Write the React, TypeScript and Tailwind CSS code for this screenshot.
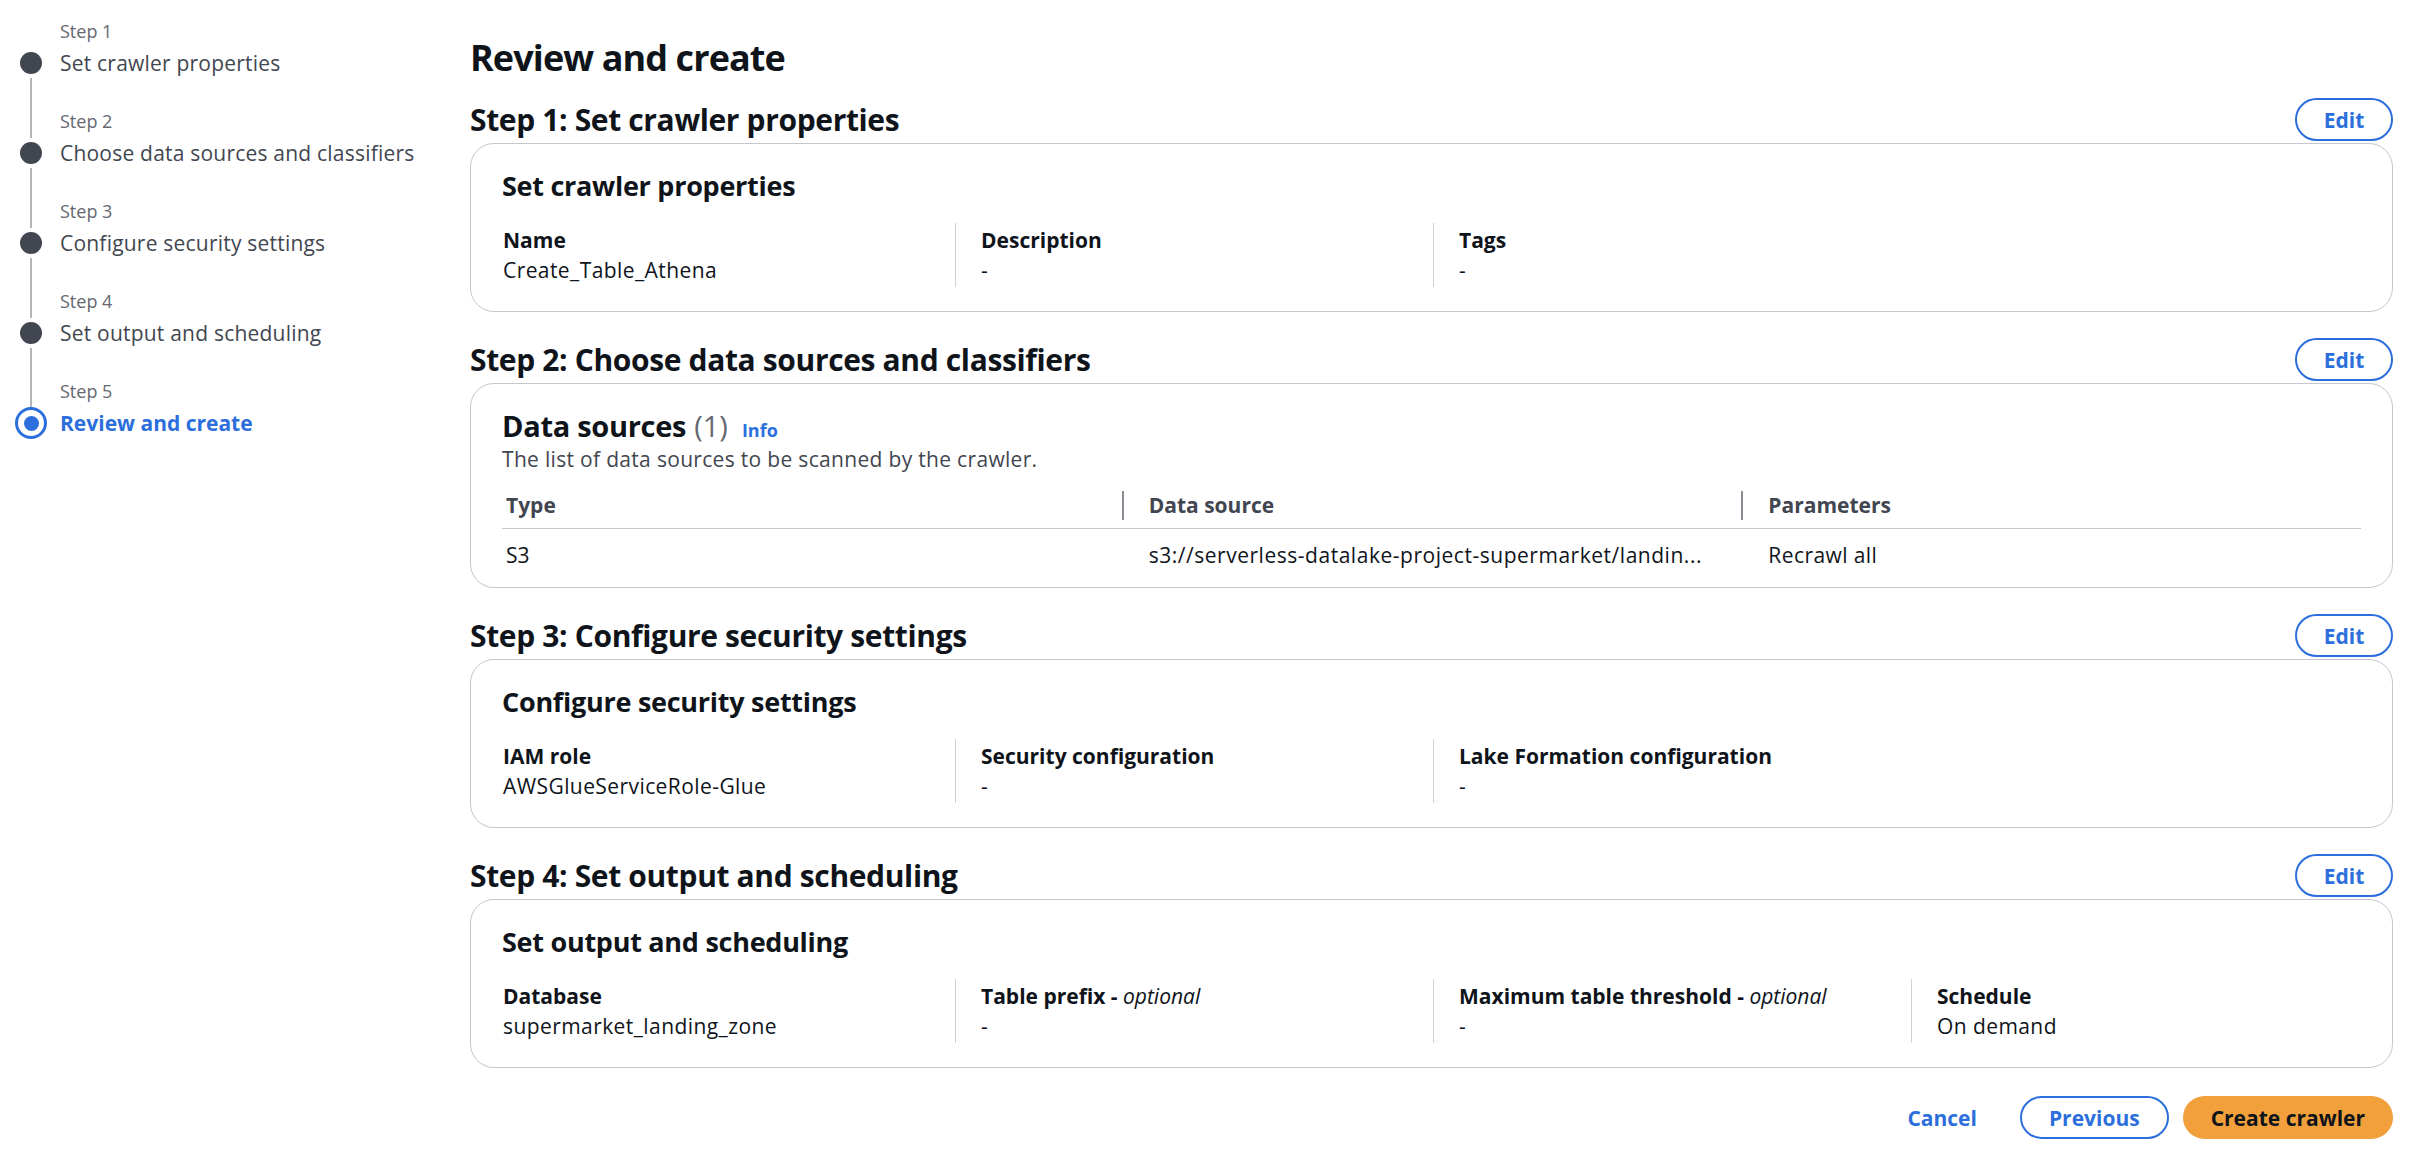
import React from "react";

const FONT = "font-['Open_Sans',sans-serif]";

function NavStep({ n, title, first, last, active }: { n: number; title: string; first?: boolean; last?: boolean; active?: boolean }) {
  return (
    <div className="flex flex-col">
      <div className="flex h-[29px]">
        <div className="flex w-[22px] justify-center">
          {!first && <div className="h-full w-[2px] bg-[#b4b4bb]" />}
        </div>
        <div className="ml-[18px] text-[18px] leading-[24px] text-[#656871]">Step {n}</div>
      </div>
      <div className="flex h-[30px] items-center">
        <div className="flex w-[22px] items-center justify-center">
          {active ? (
            <div className="flex h-[32px] w-[32px] shrink-0 items-center justify-center rounded-full border-[3px] border-[#2c6fdc]">
              <div className="h-[15px] w-[15px] rounded-full bg-[#2c6fdc]" />
            </div>
          ) : (
            <div className="h-[22px] w-[22px] shrink-0 rounded-full bg-[#424650]" />
          )}
        </div>
        <div
          className={
            active
              ? "ml-[18px] whitespace-nowrap text-[21px] font-bold leading-[30px] text-[#2c6fdc]"
              : "ml-[18px] whitespace-nowrap text-[21px] leading-[30px] tracking-[0.01em] text-[#424650]"
          }
        >
          {title}
        </div>
      </div>
      {!last && (
        <div className="flex h-[31px] w-[22px] justify-center">
          <div className="h-full w-[2px] bg-[#b4b4bb]" />
        </div>
      )}
    </div>
  );
}

function EditButton() {
  return (
    <button className="flex h-[43px] w-[98px] items-center justify-center rounded-full border-2 border-[#2c6fdc] text-[21px] font-bold leading-[30px] text-[#2c6fdc]">
      Edit
    </button>
  );
}

function Section({ title, children }: { title: string; children: React.ReactNode }) {
  return (
    <section className="flex flex-col">
      <div className="flex h-[43px] items-center justify-between">
        <h2 className="text-[30px] font-bold leading-[36px] tracking-[-0.012em] text-[#0f141a]">{title}</h2>
        <EditButton />
      </div>
      <div className="mt-[2px] rounded-[24px] border border-[#c6c6cd] bg-white">{children}</div>
    </section>
  );
}

type KV = { label: React.ReactNode; value: string };

function KeyValueCard({ heading, items }: { heading: string; items: KV[] }) {
  return (
    <div className="pb-[24px] pt-[26px]">
      <h3 className="pl-[31px] text-[27px] font-bold leading-[32px] tracking-[-0.01em] text-[#0f141a]">{heading}</h3>
      <div className="mt-[21px] pl-[6px]">
        <div className="grid grid-cols-[repeat(4,478px)]">
          {items.map((it, i) => (
            <div
              key={i}
              className={
                i === 0
                  ? "border-l border-transparent py-[2px] pl-[25px]"
                  : "border-l border-[#d1d1d6] py-[2px] pl-[25px]"
              }
            >
              <div className="text-[21px] font-bold leading-[30px] text-[#0f141a]">{it.label}</div>
              <div className="text-[21px] leading-[30px] tracking-[0.02em] text-[#0f141a]">{it.value}</div>
            </div>
          ))}
        </div>
      </div>
    </div>
  );
}

function Optional({ label }: { label: string }) {
  return (
    <>
      {label} - <span className="font-normal italic">optional</span>
    </>
  );
}

function DataSourcesCard() {
  return (
    <div className="px-[31px] pb-[6px] pt-[26px]">
      <div className="flex h-[32px] items-baseline">
        <h3 className="text-[29px] font-bold leading-[32px] tracking-[-0.01em] text-[#0f141a]">Data sources</h3>
        <span className="ml-[8px] text-[29px] leading-[32px] text-[#656871]">(1)</span>
        <span className="ml-[14px] text-[18px] font-bold leading-[24px] text-[#2c6fdc]">Info</span>
      </div>
      <div className="mt-[2px] text-[21px] leading-[30px] tracking-[0.015em] text-[#424650]">
        The list of data sources to be scanned by the crawler.
      </div>
      <div className="mt-[12px]">
        <div className="grid grid-cols-3 border-b border-[#c6c6cd] pb-[8px] pt-[4px]">
          <div className="flex h-[30px] items-center pl-[4px] text-[21px] font-bold leading-[30px] text-[#424650]">Type</div>
          <div className="flex h-[30px] items-center">
            <span className="h-[29px] w-[2px] bg-[#8c8c94]" />
            <span className="ml-[25px] text-[21px] font-bold leading-[30px] text-[#424650]">Data source</span>
          </div>
          <div className="flex h-[30px] items-center">
            <span className="h-[29px] w-[2px] bg-[#8c8c94]" />
            <span className="ml-[25px] text-[21px] font-bold leading-[30px] text-[#424650]">Parameters</span>
          </div>
        </div>
        <div className="grid grid-cols-3 py-[11px]">
          <div className="pl-[4px] text-[21px] leading-[30px] text-[#0f141a]">S3</div>
          <div className="overflow-hidden whitespace-nowrap pl-[27px] text-[21px] leading-[30px] tracking-[0.025em] text-[#0f141a]">
            s3://serverless-datalake-project-supermarket/landin...
          </div>
          <div className="pl-[27px] text-[21px] leading-[30px] tracking-[0.02em] text-[#0f141a]">Recrawl all</div>
        </div>
      </div>
    </div>
  );
}

export default function App() {
  return (
    <div className={`${FONT} flex h-[1156px] w-[2416px] overflow-hidden bg-white`}>
      <nav className="w-[470px] shrink-0 pl-[20px] pt-[19px]">
        <NavStep n={1} title="Set crawler properties" first />
        <NavStep n={2} title="Choose data sources and classifiers" />
        <NavStep n={3} title="Configure security settings" />
        <NavStep n={4} title="Set output and scheduling" />
        <NavStep n={5} title="Review and create" last active />
      </nav>
      <main className="flex flex-1 flex-col pr-[23px]">
        <h1 className="pt-[36px] text-[36px] font-bold leading-[44px] tracking-[-0.025em] text-[#0f141a]">Review and create</h1>
        <div className="mt-[18px] flex flex-col gap-[26px]">
          <Section title="Step 1: Set crawler properties">
            <KeyValueCard
              heading="Set crawler properties"
              items={[
                { label: "Name", value: "Create_Table_Athena" },
                { label: "Description", value: "-" },
                { label: "Tags", value: "-" },
              ]}
            />
          </Section>
          <Section title="Step 2: Choose data sources and classifiers">
            <DataSourcesCard />
          </Section>
          <Section title="Step 3: Configure security settings">
            <KeyValueCard
              heading="Configure security settings"
              items={[
                { label: "IAM role", value: "AWSGlueServiceRole-Glue" },
                { label: "Security configuration", value: "-" },
                { label: "Lake Formation configuration", value: "-" },
              ]}
            />
          </Section>
          <Section title="Step 4: Set output and scheduling">
            <KeyValueCard
              heading="Set output and scheduling"
              items={[
                { label: "Database", value: "supermarket_landing_zone" },
                { label: <Optional label="Table prefix" />, value: "-" },
                { label: <Optional label="Maximum table threshold" />, value: "-" },
                { label: "Schedule", value: "On demand" },
              ]}
            />
          </Section>
        </div>
        <div className="mt-[28px] flex items-center justify-end gap-[14px]">
          <button className="flex h-[43px] items-center px-[29px] text-[21px] font-bold leading-[30px] text-[#2c6fdc]">Cancel</button>
          <button className="flex h-[43px] items-center rounded-full border-2 border-[#2c6fdc] px-[27px] text-[21px] font-bold leading-[30px] text-[#2c6fdc]">
            Previous
          </button>
          <button className="flex h-[43px] items-center rounded-full bg-[#f1a03b] px-[28px] text-[21px] font-bold leading-[30px] text-[#0f141a]">
            Create crawler
          </button>
        </div>
      </main>
    </div>
  );
}
